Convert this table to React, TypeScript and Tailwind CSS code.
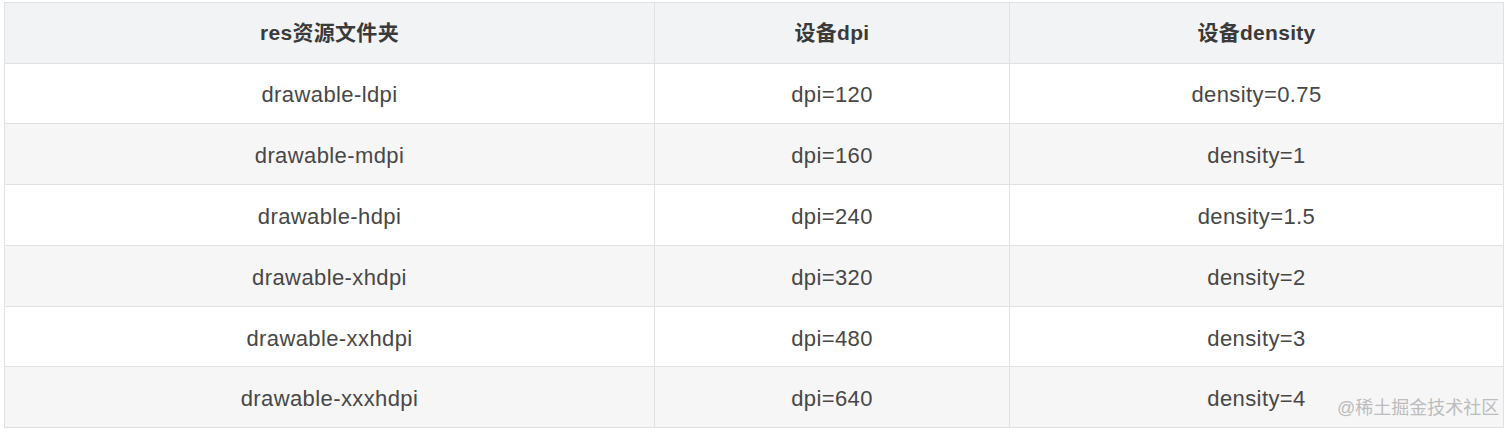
import React from "react";

const rows = [
  ["drawable-ldpi", "dpi=120", "density=0.75"],
  ["drawable-mdpi", "dpi=160", "density=1"],
  ["drawable-hdpi", "dpi=240", "density=1.5"],
  ["drawable-xhdpi", "dpi=320", "density=2"],
  ["drawable-xxhdpi", "dpi=480", "density=3"],
  ["drawable-xxxhdpi", "dpi=640", "density=4"],
];

export default function App() {
  return (
    <div
      className="relative w-[1512px] h-[435px] bg-white pl-[4px] pt-[2px]"
      style={{ fontFamily: '"Liberation Sans", "Noto Sans CJK SC", sans-serif' }}
    >
      <table className="border-collapse text-[22px] text-[#474747] w-[1499px] table-fixed">
        <colgroup>
          <col className="w-[650px]" />
          <col className="w-[355px]" />
          <col className="w-[494px]" />
        </colgroup>
        <thead>
          <tr className="bg-[#f2f3f5] h-[60.5px]">
            <th className="border border-[#dfe1e4] font-bold text-center text-[21px] text-[#3a3a3a] tracking-[0.3px]">res资源文件夹</th>
            <th className="border border-[#dfe1e4] font-bold text-center text-[21px] text-[#3a3a3a] tracking-[0.3px]">设备dpi</th>
            <th className="border border-[#dfe1e4] font-bold text-center text-[21px] text-[#3a3a3a] tracking-[0.3px]">设备density</th>
          </tr>
        </thead>
        <tbody>
          {rows.map((r, i) => (
            <tr key={i} className={`h-[60.8px] ${i % 2 === 1 ? "bg-[#f6f6f7]" : "bg-white"}`}>
              {r.map((c, j) => (
                <td key={j} className="border border-[#dfe1e4] text-center tracking-[0.4px] pt-[3px]">
                  {c}
                </td>
              ))}
            </tr>
          ))}
        </tbody>
      </table>
      <div className="absolute left-[1337px] top-[395px] text-[18px] text-[#bcbcbc]">
        @稀土掘金技术社区
      </div>
    </div>
  );
}
